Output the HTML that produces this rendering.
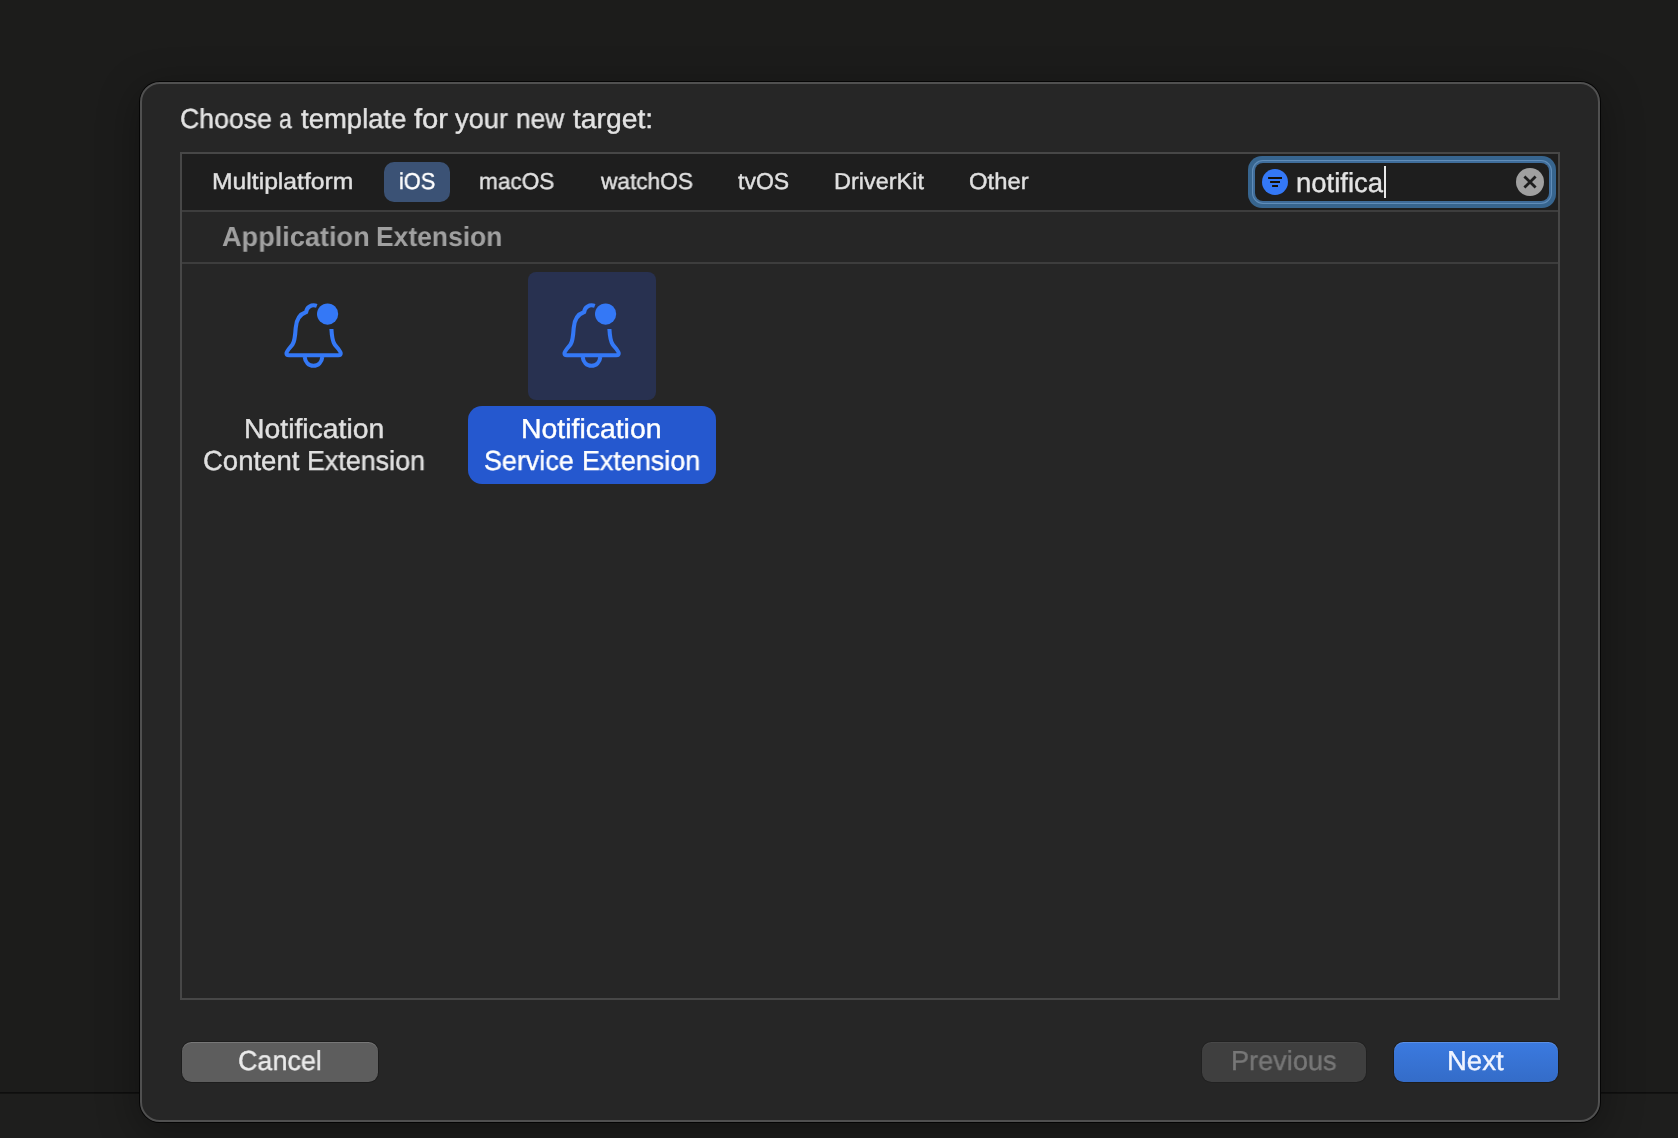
<!DOCTYPE html>
<html><head><meta charset="utf-8">
<style>
*{margin:0;padding:0;box-sizing:border-box}
html,body{width:1678px;height:1138px;overflow:hidden;background:#1c1c1b;font-family:"Liberation Sans",sans-serif;color:#e6e6e6}
.abs{position:absolute}
.w{position:absolute;white-space:nowrap;transform-origin:0 0;display:block;line-height:1;text-rendering:geometricPrecision;will-change:transform;-webkit-text-stroke:0.4px currentColor}
#bgline{left:0;top:1092px;width:1678px;height:2px;background:linear-gradient(#0e0e0e 50%,#131312 50%)}
#bgbot{left:0;top:1094px;width:1678px;height:44px;background:#1e1e1d}
#dlg{left:139px;top:81px;width:1462px;height:1042px;border-radius:21px;background:#050505;box-shadow:0 10px 40px 2px rgba(0,0,0,.32)}
#dlg2{left:140px;top:82px;width:1460px;height:1040px;border-radius:20px;background:#262626;border:2px solid #505050}
#title{left:181px;top:103px;font-size:26px;line-height:32px;white-space:nowrap;color:#e4e4e4}
#panel{left:180px;top:152px;width:1380px;height:848px;border:2px solid #474747;background:#262626}
#tabbar{left:182px;top:154px;width:1376px;height:56px;background:#1e1e1e}
#div1{left:182px;top:210px;width:1376px;height:2px;background:#3d3d3d}
#div2{left:182px;top:262px;width:1376px;height:2px;background:#3d3d3d}
.tab{top:166px;font-size:24px;line-height:30px;white-space:nowrap;color:#e2e2e2}
#pill{left:384px;top:162px;width:66px;height:40px;border-radius:10px;background:#3b5275}
#sect{left:223px;top:221px;font-size:26px;line-height:32px;font-weight:bold;color:#9b9b9b;white-space:nowrap}
#ring{left:1248px;top:156px;width:308px;height:52px;border-radius:14px;background:#37658f}
#ring2{left:1252px;top:160px;width:300px;height:44px;border-radius:11px;background:#608db9}
#ring3{left:1253px;top:161px;width:298px;height:42px;border-radius:10px;background:#3f6d9b}
#field{left:1255px;top:163px;width:294px;height:38px;border-radius:8px;background:#1e1e1e}
#ficon{left:1262px;top:169px;width:26px;height:26px;border-radius:13px;background:#3478f6}
#stext{left:1297px;top:166px;font-size:26px;line-height:32px;color:#e4e4e4;white-space:nowrap}
#caret{left:1384px;top:166px;width:2px;height:32px;background:#e8e8e8}
#clear{left:1516px;top:168px;width:28px;height:28px;border-radius:14px;background:#a0a0a0}
.lbl{font-size:26px;line-height:32px;text-align:center;white-space:nowrap;color:#e2e2e2}
#selicon{left:528px;top:272px;width:128px;height:128px;border-radius:8px;background:#283150}
#sellbl{left:468px;top:406px;width:248px;height:78px;border-radius:14px;background:#2558cf}
.btn{top:1042px;height:40px;border-radius:9.5px;box-shadow:0 0 0 1px rgba(0,0,0,.22),inset 0 1px 0 rgba(255,255,255,.16)}
#cancel{left:182px;width:196px;background:#5d5d5d}
#prev{left:1202px;width:164px;background:#3f3f3f;box-shadow:0 0 0 1px rgba(0,0,0,.12),inset 0 1px 0 rgba(255,255,255,.05)}
#next{left:1394px;width:164px;background:linear-gradient(#3b7ae0,#346cc8)}
</style></head><body>
<div class="abs" id="bgline"></div><div class="abs" id="bgbot"></div>
<div class="abs" id="dlg"></div><div class="abs" id="dlg2"></div>
<div class="abs" id="panel"></div>
<div class="abs" id="tabbar"></div><div class="abs" id="div1"></div><div class="abs" id="div2"></div>
<div class="abs" id="pill"></div>
<div class="abs" id="ring"></div><div class="abs" id="ring2"></div><div class="abs" id="ring3"></div><div class="abs" id="field"></div>
<div class="abs" id="ficon"><svg width="26" height="26" viewBox="0 0 26 26"><g stroke="#140f06" stroke-width="1.900"><path d="M6.100 9h13.900M8.100 13.050h9.900M10.100 17h5.900"/></g></svg></div>
<div class="abs" id="caret"></div>
<div class="abs" id="clear"><svg width="28" height="28" viewBox="0 0 28 28"><path d="M8.4 8.4l11.200 11.200M19.600 8.400l-11.200 11.200" stroke="#1e1e1e" stroke-width="2.8"/></svg></div>

<div class="abs" id="selicon"></div><div class="abs" id="sellbl"></div>
<svg class="abs" id="bell1" style="left:260px;top:290px" width="110" height="90" viewBox="0 0 110 90"><use href="#bell"/></svg>
<svg class="abs" id="bell2" style="left:538px;top:290px" width="110" height="90" viewBox="0 0 110 90"><use href="#bell"/></svg>
<svg width="0" height="0" style="position:absolute"><defs><g id="bell" fill="none" stroke="#3478f6" stroke-width="4.100" stroke-linecap="butt" stroke-linejoin="round">
<path d="M56.800 15.900c-5.400-1.900-10.300 1.300-10.600 6.100c-6.5 2.2-10 8-10.5 16c-.5 8-1 13.500-3.200 16.500c-2.500 3.400-6 6.500-6 8.800c0 1.300 .8 2 2.300 2h49.600c1.500 0 2.300-.7 2.300-2c0-2.300-3.500-5.400-6-8.800c-2.200-3-2.900-8.500-3.300-15.500"/>
<path d="M44.700 67c.5 5 4 8.800 8.800 8.800s8.300-3.800 8.800-8.800"/>
<circle cx="67.600" cy="24.100" r="10.600" fill="#3478f6" stroke="none"/></g></defs></svg>

<div class="abs btn" id="cancel"></div>
<div class="abs btn" id="prev"></div>
<div class="abs btn" id="next"></div>
<span class="w" style="left:179.73px;top:105.00px;font-size:27.5px;font-weight:400;color:#e3e3e3;transform:scaleX(0.9691)">Choose</span>
<span class="w" style="left:279.17px;top:105.00px;font-size:27.5px;font-weight:400;color:#e3e3e3;transform:scaleX(0.8333)">a</span>
<span class="w" style="left:301.10px;top:105.00px;font-size:27.5px;font-weight:400;color:#e3e3e3;transform:scaleX(0.9983)">template</span>
<span class="w" style="left:413.90px;top:105.00px;font-size:27.5px;font-weight:400;color:#e3e3e3;transform:scaleX(1.0615)">for</span>
<span class="w" style="left:455.00px;top:105.00px;font-size:27.5px;font-weight:400;color:#e3e3e3;transform:scaleX(0.9918)">your</span>
<span class="w" style="left:515.84px;top:105.00px;font-size:27.5px;font-weight:400;color:#e3e3e3;transform:scaleX(0.9559)">new</span>
<span class="w" style="left:572.90px;top:105.00px;font-size:27.5px;font-weight:400;color:#e3e3e3;transform:scaleX(1.0285)">target:</span>
<span class="w" style="left:211.93px;top:170.00px;font-size:23px;font-weight:400;color:#e0e0e0;transform:scaleX(1.0735)">Multiplatform</span>
<span class="w" style="left:479.42px;top:170.00px;font-size:23px;font-weight:400;color:#e0e0e0;transform:scaleX(0.9822)">macOS</span>
<span class="w" style="left:601.49px;top:170.00px;font-size:23px;font-weight:400;color:#e0e0e0;transform:scaleX(0.9854)">watchOS</span>
<span class="w" style="left:738.40px;top:170.00px;font-size:23px;font-weight:400;color:#e0e0e0;transform:scaleX(1.0004)">tvOS</span>
<span class="w" style="left:834.28px;top:170.00px;font-size:23px;font-weight:400;color:#e0e0e0;transform:scaleX(1.0207)">DriverKit</span>
<span class="w" style="left:969.36px;top:170.00px;font-size:23px;font-weight:400;color:#e0e0e0;transform:scaleX(1.0358)">Other</span>
<span class="w" style="left:398.55px;top:170.00px;font-size:23px;font-weight:400;color:#ffffff;transform:scaleX(0.9459)">iOS</span>
<span class="w" style="left:221.60px;top:223.00px;font-size:27.5px;font-weight:700;color:#a0a0a0;-webkit-text-stroke:0;transform:scaleX(0.9864)">Application</span>
<span class="w" style="left:376.24px;top:223.00px;font-size:27.5px;font-weight:700;color:#a0a0a0;-webkit-text-stroke:0;transform:scaleX(0.9620)">Extension</span>
<span class="w" style="left:1296.30px;top:169.00px;font-size:27.5px;font-weight:400;color:#e3e3e3;transform:scaleX(0.9961)">notifica</span>
<span class="w" style="left:243.54px;top:415.00px;font-size:27.5px;font-weight:400;color:#e0e0e0;transform:scaleX(1.0313)">Notification</span>
<span class="w" style="left:202.90px;top:447.00px;font-size:27.5px;font-weight:400;color:#e0e0e0;transform:scaleX(0.9950)">Content</span>
<span class="w" style="left:306.75px;top:447.00px;font-size:27.5px;font-weight:400;color:#e0e0e0;transform:scaleX(0.9772)">Extension</span>
<span class="w" style="left:521.43px;top:415.00px;font-size:27.5px;font-weight:400;color:#ffffff;transform:scaleX(1.0328)">Notification</span>
<span class="w" style="left:484.32px;top:447.00px;font-size:27.5px;font-weight:400;color:#ffffff;transform:scaleX(0.9778)">Service</span>
<span class="w" style="left:581.54px;top:447.00px;font-size:27.5px;font-weight:400;color:#ffffff;transform:scaleX(0.9789)">Extension</span>
<span class="w" style="left:237.82px;top:1047.00px;font-size:27.5px;font-weight:400;color:#ebebeb;transform:scaleX(0.9785)">Cancel</span>
<span class="w" style="left:1230.63px;top:1047.00px;font-size:27.5px;font-weight:400;color:#777777;transform:scaleX(0.9862)">Previous</span>
<span class="w" style="left:1446.80px;top:1047.00px;font-size:27.5px;font-weight:400;color:#f0f4ff;transform:scaleX(0.9981)">Next</span>
</body></html>
